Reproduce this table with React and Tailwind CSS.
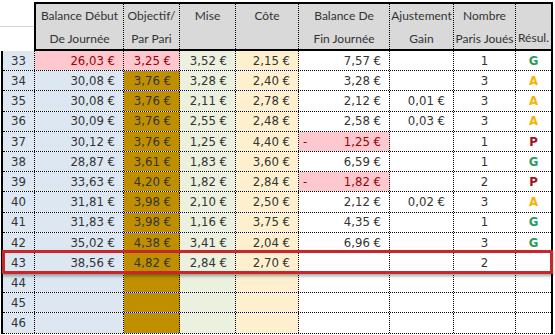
const head = [
  { w: 'w-[88px]', a: 'Balance Début', b: 'De Journée' },
  { w: 'w-[56px]', a: 'Objectif/', b: 'Par Pari' },
  { w: 'w-[56px]', a: 'Mise', b: '' },
  { w: 'w-[63px]', a: 'Côte', b: '' },
  { w: 'w-[91px]', a: 'Balance De', b: 'Fin Journée' },
  { w: 'w-[64px]', a: 'Ajustement', b: 'Gain' },
  { w: 'w-[62px]', a: 'Nombre', b: 'Paris Joués' },
  { w: 'w-[35px]', a: '', b: 'Résul.' },
];

const rows = [
  { n: 33, deb: '26,03 €', obj: '3,25 €', mise: '3,52 €', cote: '2,15 €', fin: '7,57 €', aj: '', nb: '1', r: 'G', first: true },
  { n: 34, deb: '30,08 €', obj: '3,76 €', mise: '3,28 €', cote: '2,40 €', fin: '3,28 €', aj: '', nb: '3', r: 'A' },
  { n: 35, deb: '30,08 €', obj: '3,76 €', mise: '2,11 €', cote: '2,78 €', fin: '2,12 €', aj: '0,01 €', nb: '3', r: 'A' },
  { n: 36, deb: '30,09 €', obj: '3,76 €', mise: '2,55 €', cote: '2,48 €', fin: '2,58 €', aj: '0,03 €', nb: '3', r: 'A' },
  { n: 37, deb: '30,12 €', obj: '3,76 €', mise: '1,25 €', cote: '4,40 €', fin: '1,25 €', neg: true, aj: '', nb: '1', r: 'P' },
  { n: 38, deb: '28,87 €', obj: '3,61 €', mise: '1,83 €', cote: '3,60 €', fin: '6,59 €', aj: '', nb: '1', r: 'G' },
  { n: 39, deb: '33,63 €', obj: '4,20 €', mise: '1,82 €', cote: '2,84 €', fin: '1,82 €', neg: true, aj: '', nb: '2', r: 'P' },
  { n: 40, deb: '31,81 €', obj: '3,98 €', mise: '2,10 €', cote: '2,50 €', fin: '2,12 €', aj: '0,02 €', nb: '3', r: 'A' },
  { n: 41, deb: '31,83 €', obj: '3,98 €', mise: '1,16 €', cote: '3,75 €', fin: '4,35 €', aj: '', nb: '1', r: 'G' },
  { n: 42, deb: '35,02 €', obj: '4,38 €', mise: '3,41 €', cote: '2,04 €', fin: '6,96 €', aj: '', nb: '3', r: 'G' },
  { n: 43, deb: '38,56 €', obj: '4,82 €', mise: '2,84 €', cote: '2,70 €', fin: '', aj: '', nb: '2', r: '' },
  { n: 44 }, { n: 45 }, { n: 46 },
];

const resColor = { G: 'text-[#2f9a5e]', A: 'text-[#f4b400]', P: 'text-[#a0101a]' };

const cell = 'h-full border-r border-dotted border-black flex items-center';

function Row({ r }) {
  return (
    <div className="flex h-[20.2px] border-b border-dotted border-black text-[13px] text-[#333]">
      <div className={`${cell} w-[32px] bg-[#dde7f2] justify-center`}>{r.n}</div>
      <div className={`${cell} w-[89px] justify-end pr-2 ${r.first ? 'bg-[#ffc7ce] text-[#9c0006]' : 'bg-[#dde7f2]'}`}>{r.deb}</div>
      <div className={`${cell} w-[56px] justify-end pr-2 ${r.first ? 'bg-[#ffc7ce] text-[#9c0006]' : 'bg-[#bf8f00]'}`}>{r.obj}</div>
      <div className={`${cell} w-[56px] justify-end pr-2 bg-[#ebf1de]`}>{r.mise}</div>
      <div className={`${cell} w-[63px] justify-end pr-2 bg-[#fef0cf]`}>{r.cote}</div>
      <div className={`${cell} w-[91px] justify-between pr-2 pl-1 ${r.neg ? 'bg-[#ffc7ce] text-[#9c0006]' : 'bg-white'}`}>
        <span>{r.neg ? '-' : ''}</span>
        <span>{r.fin}</span>
      </div>
      <div className={`${cell} w-[64px] justify-end pr-2`}>{r.aj}</div>
      <div className={`${cell} w-[62px] justify-center`}>{r.nb}</div>
      <div className={`h-full w-[35px] flex items-center justify-center font-bold text-[13px] ${resColor[r.r] || ''}`}>{r.r}</div>
    </div>
  );
}

export default function App() {
  return (
    <div
      className="relative w-[555px] h-[335px] overflow-hidden bg-white"
      style={{ fontFamily: '"DejaVu Sans Condensed", "DejaVu Sans", sans-serif' }}
    >
      {/* header */}
      <div className="flex h-[51px]">
        <div className="w-[34px] flex flex-col">
          <div className="h-[27px] border-b border-[#d4d4d4]" />
        </div>
        <div
          className="flex w-[519px] mt-[2px] border-2 border-black bg-[#d9d9d9] text-[12px] text-[#333]"
          style={{ fontFamily: 'Lato, "Open Sans", sans-serif' }}
        >
          {head.map((h, i) => (
            <div
              key={i}
              className={`${h.w} h-full flex flex-col items-center leading-[23px] whitespace-nowrap ${i < head.length - 1 ? 'border-r border-dotted border-black' : ''}`}
            >
              <span className="h-[23px]">{h.a}</span>
              <span className="h-[23px]">{h.b}</span>
            </div>
          ))}
        </div>
      </div>

      {/* rows */}
      <div className="ml-[1px] w-[552px] border-l-2 border-r-2 border-black">
        {rows.map(r => (
          <Row key={r.n} r={r} />
        ))}
      </div>

      {/* selection highlight on row 43 */}
      <div className="absolute left-[2px] top-[250px] w-[551px] h-[24px] border-[3px] border-[#c8262b] shadow-[0_2px_3px_rgba(0,0,0,0.35)]" />
    </div>
  );
}
